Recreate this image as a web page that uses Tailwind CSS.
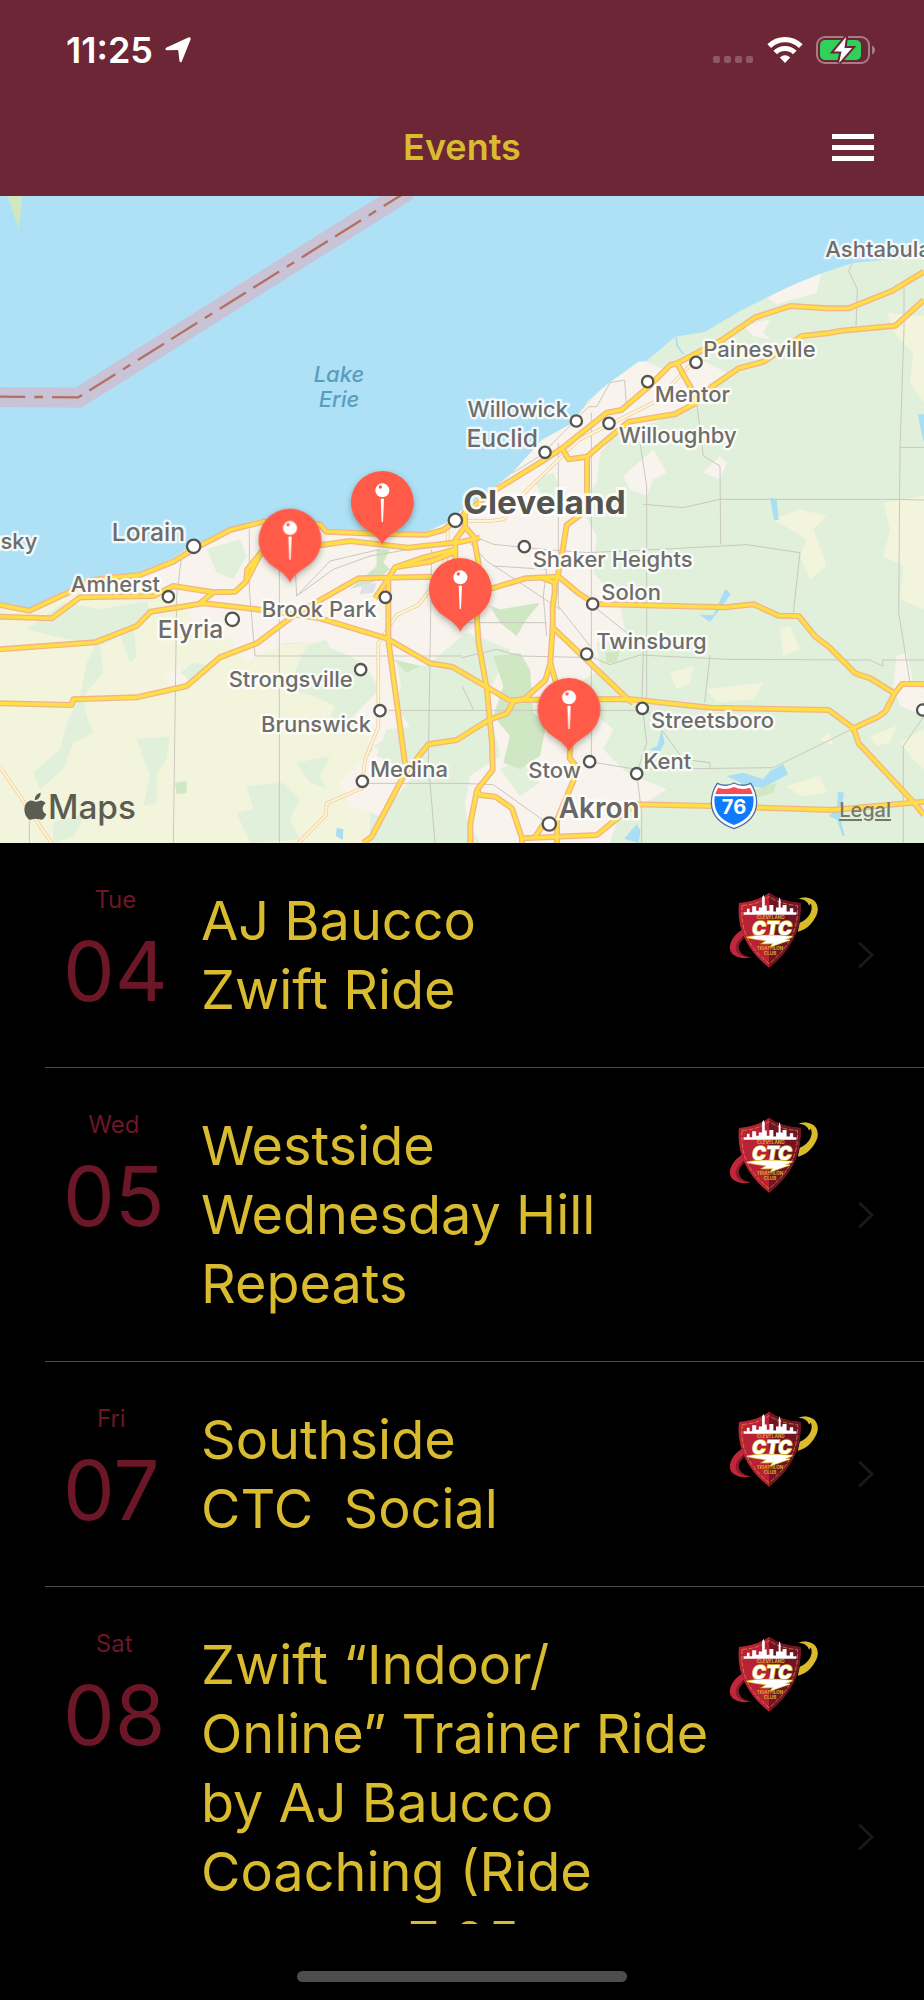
<!DOCTYPE html>
<html lang="en">
<head>
    <meta charset="UTF-8">
    <meta name="viewport" content="width=device-width, initial-scale=1.0">
    <title>Events</title>
    <script src="https://cdn.jsdelivr.net/npm/@tailwindcss/browser@4"></script>
</head>
<body class="bg-black font-[Inter,sans-serif]">

    <!-- Shared symbols -->
    <svg class="absolute w-0 h-0" aria-hidden="true">
        <symbol id="logo" viewBox="20 16 276 236">
            <path d="M248 36 C285 34 302 66 282 98 C270 120 250 136 230 139 L236 112 C258 104 272 84 272 66 C271 48 262 40 248 36Z" fill="#d9bb2c"/>
            <path d="M232 40 Q256 28 276 48 L264 60 Q256 38 232 40Z" fill="#d9bb2c"/>
            <path d="M66 130 C40 144 20 172 25 194 C30 214 58 224 88 217 C62 216 44 206 44 190 C44 172 58 156 74 148Z" fill="#c0273a"/>
            <path d="M74 154 C54 168 46 186 56 200 C62 210 76 214 88 217 C64 216 40 206 42 186 C45 168 60 156 74 154Z" fill="#8a1c2d"/>
            <path d="M52 52 Q110 48 143 21 Q178 48 238 52 Q246 166 143 248 Q40 166 52 52Z" fill="#b92236"/>
            <path d="M143 21 Q178 48 238 52 Q246 166 143 248Z" fill="#711525"/>
            <path d="M62 60 Q112 56 143 33 Q176 56 229 60 Q235 162 143 236 Q50 162 62 60Z" fill="none" stroke="#d9a52c" stroke-width="2" stroke-dasharray="14 5"/>
            <path d="M66 88 V80 H76 V70 H84 V80 H92 V62 H104 V76 H112 V66 H122 V36 L126 28 L130 36 V60 H136 V76 H144 V58 H156 V78 H164 V66 H172 V46 L175 34 L178 46 V66 H184 V58 H196 V78 H206 V68 H216 V80 H226 V88Z" fill="#fff"/>
            <text x="148" y="102" text-anchor="middle" class="text-[14px] font-bold fill-[#d9a52c]">CLEVELAND</text>
            <text x="152" y="148" text-anchor="middle" class="text-[56px] font-black italic fill-white stroke-[#d9bb2c] stroke-4 [paint-order:stroke]">CTC</text>
            <path d="M76 156 Q130 146 214 154 L190 164 H206 L148 184 L156 174 L122 175 L136 166 Q104 163 76 156Z" fill="#fff" stroke="#d9bb2c" stroke-width="4" paint-order="stroke"/>
            <text x="146" y="196" text-anchor="middle" class="text-[14px] font-bold fill-[#d9a52c]">TRIATHLON</text>
            <text x="146" y="211" text-anchor="middle" class="text-[14px] font-bold fill-[#d9a52c]">CLUB</text>
        </symbol>
        <symbol id="chevron" viewBox="0 0 16 27">
            <path d="M2 2 L14 13.500 L2 25" fill="none" stroke="#19191b" stroke-width="3" stroke-linecap="round" stroke-linejoin="round"/>
        </symbol>
    </svg>

    <div class="flex flex-col h-screen overflow-hidden">

        <!-- Header -->
        <header class="bg-[#6c2635] shrink-0 pb-0.5">
            <div class="flex items-center justify-between h-[100px] pl-[66px] pr-12">
                <div class="flex items-center gap-3 text-white">
                    <span class="text-[36px] font-semibold">11:25</span>
                    <svg class="w-[26px] h-[26px]" viewBox="0 0 24 24" fill="#fff"><path d="M1 10 L21.500 .4 Q24 -.2 23.600 2.200 L15.500 22.500 Q14.200 24.500 13.300 22 L12.300 13 Q12.200 12.200 11.400 12.100 L1.600 12.300 Q-.6 11.500 1 10Z"/></svg>
                </div>
                <div class="flex items-center gap-[13px]">
                    <svg class="w-[42px] h-7" viewBox="0 0 42 28" fill="#8f5865">
                        <rect x="1" y="20" width="7" height="7" rx="2"/>
                        <rect x="12" y="20" width="7" height="7" rx="2"/>
                        <rect x="23" y="20" width="7" height="7" rx="2"/>
                        <rect x="34" y="20" width="7" height="7" rx="2"/>
                    </svg>
                    <svg class="w-9 h-7" viewBox="0 0 36 28" fill="none" stroke="#fff" stroke-width="5.200">
                        <path d="M2.200 10.200 A22.500 22.500 0 0 1 33.800 10.200"/>
                        <path d="M8.200 16.500 A14 14 0 0 1 27.800 16.500"/>
                        <path d="M18 27 L12.800 21.500 Q18 17 23.200 21.500Z" fill="#fff" stroke="none"/>
                    </svg>
                    <svg class="w-[60px] h-7" viewBox="0 0 60 28">
                        <rect x="1" y="1" width="52" height="26" rx="8" fill="none" stroke="#a77b85" stroke-width="2"/>
                        <path d="M56 9.500 Q59 11 59 14 Q59 17 56 18.500Z" fill="#a77b85"/>
                        <rect x="4" y="4" width="41" height="20" rx="5" fill="#30d158"/>
                        <path d="M30 1 L18 15.500 H25.500 L23 27 L36 12 H28.500Z" fill="#fff" stroke="#6c2635" stroke-width="4" paint-order="stroke"/>
                    </svg>
                </div>
            </div>
            <div class="grid grid-cols-[1fr_auto_1fr] items-center h-[94px] px-[50px]">
                <span></span>
                <h1 class="text-[36px] leading-[44px] font-semibold text-[#d9bb2f]">Events</h1>
                <button type="button" aria-label="Menu" class="justify-self-end flex flex-col gap-[6px]">
                    <span class="block w-[42px] h-[5px] bg-white"></span>
                    <span class="block w-[42px] h-[5px] bg-white"></span>
                    <span class="block w-[42px] h-[5px] bg-white"></span>
                </button>
            </div>
        </header>

        <!-- Map -->
        <section class="relative shrink-0 bg-[#aee1f6]">
            <svg class="block w-full h-[647px]" viewBox="0 0 2772 1941" preserveAspectRatio="xMidYMid slice">
                <defs>
                    <path id="land" d="M0 1222 L85 1246 L180 1192 L265 1150 L330 1137 L420 1132 L510 1092 L560 1060 L690 1000 L780 970 L950 985 L985 1005 L1140 1010 L1280 1007 L1340 980 L1386 942 L1486 872 L1536 832 L1626 732 L1716 682 L1766 612 L1826 562 L1916 497 L1938 496 L2026 422 L2116 407 L2216 347 L2306 302 L2366 272 L2466 232 L2556 202 L2646 192 L2772 175 V1941 H0Z"/>
                    <clipPath id="land-clip"><use href="#land"/></clipPath>
                    <g id="highways">
                        <path d="M0 1227 L87 1244 L200 1192 L265 1154 L330 1145 L420 1137 L520 1097 L580 1060 L690 1002 L790 977 L960 985 L978 1007 L1145 1014 L1280 1016 L1330 1002 L1366 975 L1426 927 L1486 882 L1636 790 L1686 757 L1821 650 L1864 642 L1946 572 L2011 507 L2031 502 L2166 432 L2266 364 L2371 330 L2481 337 L2546 337 L2676 285 L2772 227"/>
                        <path d="M2031 502 L2076 582 L2091 627"/>
                        <path d="M2772 312 L2686 389 L2526 404 L2481 412 L2406 420 L2291 497 L2216 517 L2136 572 L2086 622 L2026 654 L1886 677 L1796 752 L1761 782 L1761 892 L1764 940 L1700 987 L1688 1062 L1675 1132"/>
                        <path d="M1761 782 L1706 790 L1686 757"/>
                        <path d="M0 1262 L155 1267 L240 1204 L460 1200 L520 1170 L640 1189 L705 1187 L738 1157 L785 1067 L870 1056 L965 1047 L1050 1035 L1225 1055 L1386 1037 L1440 1025"/>
                        <path d="M738 1157 L742 1120 L785 1067"/>
                        <path d="M640 1189 L600 1222"/>
                        <path d="M0 1360 L285 1339 L410 1290 L452 1247 L610 1222 L765 1239 L960 1267 L1160 1327 L1290 1402 L1355 1412 L1386 1429 L1526 1512 L1886 1509 L2131 1535 L2486 1542 L2561 1597 L2576 1642 L2740 1818 L2772 1857"/>
                        <path d="M0 1522 L215 1527 L220 1510 L410 1504 L560 1470 L660 1384 L770 1342 L890 1252 L1075 1147 L1290 1142 L1386 1185 L1476 1177 L1576 1147 L1676 1142 L1736 1192 L1786 1224 L2176 1234 L2261 1225 L2336 1259 L2396 1260 L2446 1322 L2486 1352 L2566 1432 L2611 1447 L2684 1492"/>
                        <path d="M2772 1464 H2706 L2684 1492 L2656 1547 L2635 1562 L2550 1601"/>
                        <path d="M1125 1207 L1165 1147 L1185 1114 L1290 1097 L1368 1067"/>
                        <path d="M1185 1114 L1270 1085 L1368 1060"/>
                        <path d="M1165 1147 V1332 L1215 1702"/>
                        <path d="M1090 1941 L1115 1922 L1215 1732 L1285 1645 L1370 1632 L1466 1572 L1521 1552 L1540 1517 L1576 1507 L1636 1452 L1651 1402 L1658 1292 L1658 1232 L1664 1190 L1664 1160 L1625 1145"/>
                        <path d="M1651 1402 L1668 1460"/>
                        <path d="M1675 1132 L1664 1170"/>
                        <path d="M1661 1297 L1886 1512 L1900 1521"/>
                        <path d="M1395 942 V992 L1421 1022 L1436 1102 L1431 1272 L1436 1342 L1461 1482 L1476 1642 L1478 1722 L1431 1782 L1411 1882 V1941"/>
                        <path d="M1395 992 L1366 1032 V1092"/>
                        <path d="M1431 1782 L1440 1797 L1486 1802 L1536 1837 L1566 1927 L1791 1917 L1846 1872 L1906 1825 L2136 1830 L2496 1842 L2772 1817"/>
                        <path d="M1606 1922 L1640 1870"/>
                        <path d="M1566 1920 V1941"/>
                        <path d="M1711 1642 L1709 1687 L1726 1707 L1721 1752 L1671 1872 V1941"/>
                    </g>
                    <g id="byways">
                        <path d="M0 1712 L100 1860 L155 1942"/>
                        <path d="M895 1942 L978 1857 L980 1822 L1085 1777 L1095 1692 L1135 1592 V1342 L1190 1257 L1255 1227 L1290 1182 L1343 1080 V982"/>
                        <path d="M1560 903 L1736 732 L1966 617 L2076 502"/>
                        <path d="M1400 975 H1470 L1510 970 L1530 950"/>
                    </g>
                    <g id="pin">
                        <path d="M0 127 C-8 110 -22 98 -46 82 A94 94 0 1 1 46 82 C22 98 8 110 0 127Z" class="fill-[#ff5b48]"/>
                        <path d="M-5 -11 H5 L2 59 H-2Z" fill="#fff"/>
                        <circle cy="-36" r="21" fill="#fff"/>
                        <circle cx="-6" cy="-46" r="5" fill="#ff5b48"/>
                    </g>
                </defs>

                <use href="#land" fill="#e1f0da"/>
                <g clip-path="url(#land-clip)">
                    <!-- Farmland -->
                    <g fill="#f3f4dc">
                        <path d="M0 1200 L420 1120 L700 1250 L760 1350 L940 1340 L900 1440 L1040 1470 L990 1560 L1110 1620 L1110 1941 H0Z"/>
                        <path d="M2660 350 L2772 360 V620 L2730 560 L2740 470 L2690 420Z"/>
                        <path d="M2320 970 L2400 940 L2480 960 L2440 1000 L2480 1110 L2430 1150 L2400 1080 L2420 1030Z"/>
                        <path d="M2650 920 L2772 900 V1240 L2700 1210 L2710 1110 L2650 1080 L2670 1000Z"/>
                        <path d="M2340 1300 L2370 1290 L2400 1360 L2350 1380Z"/>
                        <path d="M2010 1430 L2080 1410 L2070 1460 L2030 1480Z"/>
                        <path d="M2120 1480 L2290 1460 L2260 1510 L2150 1520Z"/>
                        <path d="M2610 1620 L2690 1590 L2670 1640 L2630 1650Z"/>
                        <path d="M2460 1630 L2490 1610 L2500 1650Z"/>
                        <path d="M2700 1640 L2772 1600 V1720 L2740 1690Z"/>
                        <path d="M2360 1770 L2460 1740 L2480 1790 L2400 1800Z"/>
                    </g>
                    <!-- Built-up areas -->
                    <g fill="#f8f4ed">
                        <path d="M400 1120 L560 1050 L790 960 L1340 970 L1540 820 L1640 710 L1740 650 L1820 560 L1920 490 L1990 520 L2080 480 L2180 530 L2130 560 L2060 640 L1960 680 L1860 700 L1800 770 L1790 860 L1740 930 L1790 1020 L1780 1130 L1860 1220 L1880 1330 L1790 1340 L1800 1420 L1740 1460 L1770 1540 L1840 1600 L1810 1660 L1880 1730 L2000 1780 L1920 1830 L1850 1880 L1830 1941 H1440 L1390 1850 L1410 1740 L1500 1680 L1460 1500 L1530 1360 L1400 1310 L1290 1400 L1220 1440 L1180 1520 L1230 1590 L1120 1650 L1240 1740 L1140 1860 L1050 1830 L1020 1760 L1120 1660 L1060 1560 L1140 1480 L1090 1400 L960 1340 L850 1340 L740 1400 L690 1330 L600 1300 L540 1220 L480 1190Z"/>
                        <path d="M2300 305 L2466 225 L2450 290 L2330 325Z"/>
                        <path d="M2230 390 L2310 370 L2290 410 L2310 430 L2260 420Z"/>
                        <path d="M1870 840 L1960 760 L2000 830 L1960 850 L1940 900 L1890 880Z"/>
                        <path d="M2110 830 L2160 780 L2180 800 L2160 850Z"/>
                        <path d="M495 1440 L540 1410 L560 1450 L520 1480Z"/>
                        <path d="M2690 1380 L2720 1370 L2740 1460 L2772 1480 V1560 L2700 1530 L2680 1470Z"/>
                        <path d="M2180 1590 L2230 1570 L2240 1600Z"/>
                    </g>
                    <!-- Woodland -->
                    <g fill="#e1f0da">
                        <path d="M80 1300 L190 1220 L300 1240 L440 1215 L450 1250 L400 1290 L410 1380 L390 1400 L360 1320 L300 1350 L310 1430 L250 1500 L260 1560 L280 1610 L220 1640 L190 1720 L120 1780 L100 1730 L180 1660 L200 1580 L240 1500 L260 1400 L290 1340 L200 1330Z"/>
                        <path d="M410 1630 L510 1620 L500 1690 L470 1730 L470 1820 L430 1830 L450 1740Z"/>
                        <path d="M890 1700 L990 1680 L960 1740 L980 1780 L930 1760Z"/>
                        <path d="M740 1770 L850 1760 L900 1810 L870 1870 L900 1930 L750 1941 L710 1850 L760 1840Z"/>
                        <path d="M620 1060 L720 1030 L740 1080 L700 1150 L650 1130Z"/>
                        <path d="M920 1350 L980 1330 L1020 1440 L1080 1470 L1050 1550 L940 1500 L860 1480Z"/>
                        <path d="M540 1430 L580 1400 L640 1410 L580 1460Z"/>
                        <path d="M160 1880 L260 1850 L220 1920 L160 1941Z"/>
                        <path d="M1190 1400 L1290 1410 L1400 1440 L1440 1520 L1420 1620 L1290 1630 L1220 1560Z"/>
                        <path d="M1600 850 L1660 830 L1690 900 L1640 930Z"/>
                        <path d="M1160 1600 L1290 1590 L1300 1660 L1210 1720 L1130 1680Z"/>
                        <path d="M1240 1800 L1380 1700 L1400 1860 L1330 1941 H1150Z"/>
                        <path d="M1500 1720 L1560 1690 L1620 1760 L1560 1800Z"/>
                    </g>
                    <!-- Parks -->
                    <g fill="#cfe8c3">
                        <path d="M1480 1380 L1560 1370 L1590 1420 L1600 1550 L1640 1580 L1620 1680 L1560 1720 L1510 1700 L1530 1620 L1480 1560 L1510 1470Z"/>
                        <path d="M1470 1230 L1500 1240 L1560 1230 L1620 1220 L1580 1270 L1550 1320 L1500 1280Z"/>
                        <path d="M1130 1060 L1170 1060 L1150 1100 L1170 1120 L1120 1160 L1050 1180 L1130 1110Z"/>
                        <path d="M1180 1390 L1260 1410 L1220 1430Z"/>
                        <path d="M525 1760 L560 1755 V1790 L530 1795Z"/>
                        <path d="M1815 1370 L1860 1360 L1850 1400 L1820 1400Z"/>
                        <path d="M2240 1790 L2330 1760 L2320 1790 L2270 1805Z"/>
                    </g>
                    <path d="M1085 1170 L1130 1160 L1120 1190 L1080 1195Z" fill="#dde1ea"/>
                    <!-- Rivers and reservoirs -->
                    <g fill="#a9def5">
                        <path d="M2176 1178 L2192 1194 L2160 1240 L2130 1278 L2100 1256 L2140 1258Z"/>
                        <path d="M2310 905 L2330 912 L2336 972 H2322Z"/>
                        <path d="M2754 655 H2772 V740 L2760 690Z"/>
                        <path d="M1985 1600 L1994 1640 L1976 1672 L1950 1660 L1972 1650Z"/>
                        <path d="M2180 1740 L2230 1730 L2290 1750 L2310 1725 L2350 1705 L2364 1735 L2290 1775 L2240 1770Z"/>
                        <path d="M2514 1787 L2532 1790 L2520 1860 L2534 1920 H2528 L2510 1870 L2486 1860 L2510 1840Z"/>
                        <path d="M1872 1928 L1910 1885 L1922 1905 L1916 1941Z"/>
                        <path d="M1010 1895 L1030 1900 L1028 1932 L1008 1920Z"/>
                    </g>
                    <path d="M2028 425 L2032 450 L2050 475" fill="none" stroke="#a9def5" stroke-width="5"/>
                    <!-- Local roads -->
                    <g fill="none" stroke="#c9c8c0" stroke-width="3">
                        <path d="M545 1080 L530 1200 L520 1941"/>
                        <path d="M748 1000 V1180 L765 1380 H1386"/>
                        <path d="M838 1120 V1941"/>
                        <path d="M885 1100 L890 1200 L990 1095 L1140 1060"/>
                        <path d="M890 1200 L1000 1120 L1110 1080 L1290 1050"/>
                        <path d="M1165 1543 H1386 L1927 1543"/>
                        <path d="M1295 1060 L1285 1700 L1305 1941"/>
                        <path d="M1085 1762 H1386 L1480 1766 L1640 1880"/>
                        <path d="M88 1870 V1941"/>
                        <path d="M1420 1020 L1480 1045 L1630 1060 L1760 1070 L1980 1060 L2240 1046 L2400 1070 L2380 1250"/>
                        <path d="M1675 740 V1230 L1770 1350"/>
                        <path d="M1774 650 V1690"/>
                        <path d="M1780 1230 L1930 1350 L1926 1520 L1940 1640 L1910 1733 L1925 1850 V1941"/>
                        <path d="M1386 1385 L1490 1360 L1560 1380 L1780 1385 L1830 1406 L1920 1377 L2180 1390 L2610 1392 L2648 1410 V1392 H2772"/>
                        <path d="M2130 1377 L2114 1520"/>
                        <path d="M1920 740 L1940 870 V1540"/>
                        <path d="M2091 627 L2110 780 L2160 810 L2162 1046"/>
                        <path d="M1930 925 L2050 935 L2160 910 H2680 L2772 912"/>
                        <path d="M2556 202 L2546 225 L2572 280 L2568 390"/>
                        <path d="M2712 275 V400 L2700 750 L2696 1250 L2730 1460"/>
                        <path d="M2700 754 H2772"/>
                        <path d="M1769 1697 L1910 1720 L2320 1715 L2561 1597"/>
                        <path d="M1940 1540 L2050 1690 L2130 1700 V1715"/>
                        <path d="M2772 1560 L2710 1650 V1941"/>
                        <path d="M1480 1110 L1640 1120 L1630 1200 L1640 1320"/>
                        <path d="M1400 1030 L1460 1095 L1560 1160 L1680 1240"/>
                        <path d="M1536 832 L1620 780 L1766 632 H1790 L1830 560 L1874 552 L1880 640"/>
                        <path d="M1386 1280 H1640"/>
                        <path d="M1386 1470 L1420 1540"/>
                    </g>
                    <use href="#byways" fill="none" stroke="#f0cfa3" stroke-width="11" stroke-linejoin="round"/>
                    <use href="#byways" fill="none" stroke="#fff6d6" stroke-width="6" stroke-linejoin="round"/>
                </g>
                <use href="#highways" fill="none" stroke="#f2b58a" stroke-width="18" stroke-linejoin="round"/>
                <use href="#highways" fill="none" stroke="#ffdf42" stroke-width="10" stroke-linejoin="round"/>

                <!-- Border across the lake -->
                <path d="M22 0 H67 L57 100Z" fill="#cfe8bd"/>
                <path d="M0 603 L235 605 L1225 -18" fill="none" stroke="#c8c3d6" stroke-width="60"/>
                <path d="M0 602 L235 604 L1225 -16" fill="none" stroke="#b5705f" stroke-width="7" stroke-dasharray="92 27 26 27 92 26" stroke-dashoffset="16"/>

                <!-- Towns -->
                <g fill="#fff" stroke="#55544f" stroke-width="7">
                    <circle cx="581" cy="1051" r="20"/>
                    <circle cx="505" cy="1202" r="17"/>
                    <circle cx="697" cy="1270" r="20"/>
                    <circle cx="1156" cy="1204" r="17"/>
                    <circle cx="1082" cy="1421" r="17"/>
                    <circle cx="1140" cy="1544" r="17"/>
                    <circle cx="1087" cy="1756" r="17"/>
                    <circle cx="1366" cy="973" r="20"/>
                    <circle cx="1729" cy="675" r="17"/>
                    <circle cx="1635" cy="769" r="17"/>
                    <circle cx="1827" cy="682" r="17"/>
                    <circle cx="1943" cy="557" r="17"/>
                    <circle cx="2088" cy="499" r="17"/>
                    <circle cx="1573" cy="1052" r="17"/>
                    <circle cx="1778" cy="1224" r="17"/>
                    <circle cx="1760" cy="1374" r="17"/>
                    <circle cx="1927" cy="1537" r="17"/>
                    <circle cx="1910" cy="1733" r="17"/>
                    <circle cx="1769" cy="1697" r="17"/>
                    <circle cx="1648" cy="1884" r="20"/>
                    <circle cx="2768" cy="1542" r="17"/>
                </g>
                <g class="text-[66px] font-medium fill-[#6f6d6a] stroke-white/80 stroke-[14px] [paint-order:stroke] [stroke-linejoin:round]">
                    <text x="112" y="1060" text-anchor="end">Sandusky</text>
                    <text x="480" y="1187" text-anchor="end">Amherst</text>
                    <text x="1130" y="1262" text-anchor="end">Brook Park</text>
                    <text x="1058" y="1472" text-anchor="end">Strongsville</text>
                    <text x="1113" y="1609" text-anchor="end">Brunswick</text>
                    <text x="1110" y="1742">Medina</text>
                    <text x="2476" y="184">Ashtabula</text>
                    <text x="2110" y="484">Painesville</text>
                    <text x="1964" y="618">Mentor</text>
                    <text x="1704" y="664" text-anchor="end">Willowick</text>
                    <text x="1856" y="742">Willoughby</text>
                    <text x="1598" y="1114">Shaker Heights</text>
                    <text x="1804" y="1212">Solon</text>
                    <text x="1789" y="1360">Twinsburg</text>
                    <text x="1953" y="1597">Streetsboro</text>
                    <text x="1930" y="1719">Kent</text>
                    <text x="1743" y="1747" text-anchor="end">Stow</text>
                </g>
                <g class="text-[74px] font-medium fill-[#6f6d6a] stroke-white/80 stroke-[14px] [paint-order:stroke] [stroke-linejoin:round]">
                    <text x="555" y="1034" text-anchor="end">Lorain</text>
                    <text x="670" y="1326" text-anchor="end">Elyria</text>
                    <text x="1614" y="754" text-anchor="end">Euclid</text>
                </g>
                <text x="1676" y="1865" class="text-[84px] font-semibold fill-[#6a6866] stroke-white/80 stroke-[14px] [paint-order:stroke]">Akron</text>
                <text x="1390" y="954" class="text-[100px] font-bold fill-[#55544f] stroke-white/80 stroke-[16px] [paint-order:stroke]">Cleveland</text>
                <g class="text-[66px] font-medium italic fill-[#5a9dbd]" text-anchor="middle">
                    <text x="1017" y="557">Lake</text>
                    <text x="1017" y="632">Erie</text>
                </g>

                <!-- Interstate 76 -->
                <g transform="translate(2202 1829)">
                    <path d="M-50 -67 Q-25 -55 0 -68 Q25 -55 50 -67 Q68 -42 68 -8 Q66 46 0 69 Q-66 46 -68 -8 Q-68 -42 -50 -67Z" fill="#fff" stroke="#4f6ca6" stroke-width="4"/>
                    <path d="M-47 -54 Q-24 -45 0 -56 Q24 -45 47 -54 Q54 -44 56 -35 H-56 Q-54 -44 -47 -54Z" fill="#fb4b57"/>
                    <path d="M-58 -28 H58 Q66 36 0 58 Q-66 36 -58 -28Z" fill="#0f7bfb"/>
                    <text y="26" text-anchor="middle" class="text-[60px] font-bold fill-white">76</text>
                </g>

                <!-- Event pins -->
                <g class="drop-shadow-[0_8px_10px_rgba(0,0,0,0.3)]">
                    <use href="#pin" x="870" y="1032"/>
                    <use href="#pin" x="1147" y="919"/>
                    <use href="#pin" x="1381" y="1180"/>
                    <use href="#pin" x="1707" y="1540"/>
                </g>

                <!-- Attribution -->
                <g fill="#5b5c52">
                    <path d="M122 1790 Q123 1801 115 1808 Q110 1813 104 1812 Q103 1803 110 1796 Q115 1791 122 1790Z"/>
                    <path d="M106 1817 Q112 1817 120 1814 Q130 1812 137 1822 Q127 1829 128 1840 Q129 1850 139 1855 Q135 1864 130 1869 Q125 1873 118 1870 Q106 1866 98 1870 Q90 1873 85 1869 Q73 1857 73 1840 Q74 1819 89 1814 Q96 1813 106 1817Z"/>
                    <text x="144" y="1870" class="text-[100px] font-medium">Maps</text>
                </g>
            </svg>
            <a href="#" class="absolute right-[33px] bottom-[21px] text-[20px] leading-6 font-medium text-[#74796f] underline underline-offset-2">Legal</a>
        </section>

        <!-- Event list -->
        <ul class="flex-1 min-h-0 overflow-hidden">
            <li class="ml-[45px] border-b border-[#4a4a4c]">
                <a href="#" class="flex items-start pl-[18px] pr-[50px]">
                    <div class="w-[138px] shrink-0 pt-[42px] text-[#6b1728]">
                        <div class="w-fit text-center">
                            <p class="text-[24px] leading-[30px]">Tue</p>
                            <p class="text-[82px] leading-[114px]">04</p>
                        </div>
                    </div>
                    <h2 class="flex-1 py-[43px] text-[54px] leading-[69px] text-[#d9bb2f]">AJ Baucco<br>Zwift Ride</h2>
                    <svg class="w-[92px] h-[78px] mt-12 mr-[38px] shrink-0"><use href="#logo"/></svg>
                    <svg class="w-4 h-7 self-center shrink-0"><use href="#chevron"/></svg>
                </a>
            </li>
            <li class="ml-[45px] border-b border-[#4a4a4c]">
                <a href="#" class="flex items-start pl-[18px] pr-[50px]">
                    <div class="w-[138px] shrink-0 pt-[42px] text-[#6b1728]">
                        <div class="w-fit text-center">
                            <p class="text-[24px] leading-[30px]">Wed</p>
                            <p class="text-[82px] leading-[114px]">05</p>
                        </div>
                    </div>
                    <h2 class="flex-1 py-[43px] text-[54px] leading-[69px] text-[#d9bb2f]">Westside<br>Wednesday Hill<br>Repeats</h2>
                    <svg class="w-[92px] h-[78px] mt-12 mr-[38px] shrink-0"><use href="#logo"/></svg>
                    <svg class="w-4 h-7 self-center shrink-0"><use href="#chevron"/></svg>
                </a>
            </li>
            <li class="ml-[45px] border-b border-[#4a4a4c]">
                <a href="#" class="flex items-start pl-[18px] pr-[50px]">
                    <div class="w-[138px] shrink-0 pt-[42px] text-[#6b1728]">
                        <div class="w-fit text-center">
                            <p class="text-[24px] leading-[30px]">Fri</p>
                            <p class="text-[82px] leading-[114px]">07</p>
                        </div>
                    </div>
                    <h2 class="flex-1 py-[43px] text-[54px] leading-[69px] text-[#d9bb2f]">Southside<br>CTC&nbsp; Social</h2>
                    <svg class="w-[92px] h-[78px] mt-12 mr-[38px] shrink-0"><use href="#logo"/></svg>
                    <svg class="w-4 h-7 self-center shrink-0"><use href="#chevron"/></svg>
                </a>
            </li>
            <li class="ml-[45px] border-b border-[#4a4a4c]">
                <a href="#" class="flex items-start pl-[18px] pr-[50px]">
                    <div class="w-[138px] shrink-0 pt-[42px] text-[#6b1728]">
                        <div class="w-fit text-center">
                            <p class="text-[24px] leading-[30px]">Sat</p>
                            <p class="text-[82px] leading-[114px]">08</p>
                        </div>
                    </div>
                    <h2 class="flex-1 py-[43px] text-[54px] leading-[69px] text-[#d9bb2f]">Zwift “Indoor/<br>Online” Trainer Ride<br>by AJ Baucco<br>Coaching (Ride<br>runs on 7:05<br>AM)</h2>
                    <svg class="w-[92px] h-[78px] mt-12 mr-[38px] shrink-0"><use href="#logo"/></svg>
                    <svg class="w-4 h-7 self-center shrink-0"><use href="#chevron"/></svg>
                </a>
            </li>
        </ul>

        <!-- Home indicator -->
        <footer class="shrink-0 h-[76px] flex justify-center items-end pb-[18px]">
            <div class="w-[330px] h-[11px] rounded-full bg-[#4d4d4d]"></div>
        </footer>
    </div>

</body>
</html>
